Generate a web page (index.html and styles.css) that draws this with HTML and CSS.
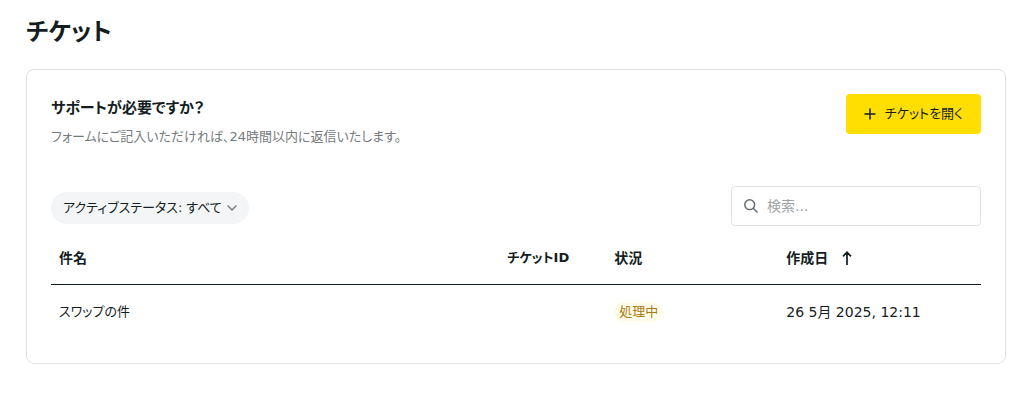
FILE: index.html
```html
<!DOCTYPE html>
<html lang="ja">
<head>
    <meta charset="UTF-8">
    <meta name="viewport" content="width=device-width, initial-scale=1.0">
    <title>チケット</title>
    <link rel="stylesheet" href="styles.css">
</head>
<body>
    <main class="page">
        <h1>チケット</h1>
        <section class="card">
            <div class="cardHeader">
                <div>
                    <h2>サポートが必要ですか？</h2>
                    <p>フォームにご記入いただければ、24時間以内に返信いたします。</p>
                </div>
                <button type="button" class="openBtn">
                    <svg width="12" height="12" viewBox="0 0 12 12" fill="none" stroke="currentColor" stroke-width="1.5" aria-hidden="true">
                        <path d="M6 .5v11M.5 6h11"/>
                    </svg>
                    チケットを開く
                </button>
            </div>

            <div class="toolbar">
                <div class="statusFilter">
                    <label for="status">アクティブステータス:</label>
                    <select id="status">
                        <option>すべて</option>
                    </select>
                    <svg width="10" height="6" viewBox="0 0 10 6" fill="none" stroke="currentColor" stroke-width="1.4" aria-hidden="true">
                        <path d="M.6 .6L5 5L9.400 .6"/>
                    </svg>
                </div>
                <label class="search">
                    <svg width="14" height="14" viewBox="0 0 14 14" fill="none" stroke="currentColor" stroke-width="1.5" aria-hidden="true">
                        <circle cx="5.700" cy="5.700" r="4.900"/>
                        <path d="M9.200 9.200L13.500 13.500"/>
                    </svg>
                    <input type="search" placeholder="検索..." aria-label="検索">
                </label>
            </div>

            <table class="tickets">
                <thead>
                    <tr>
                        <th class="colSubject">件名</th>
                        <th class="colId">チケットID</th>
                        <th class="colStatus">状況</th>
                        <th class="colDate">
                            <button type="button" class="sortBtn">
                                作成日
                                <svg width="10" height="14" viewBox="0 0 10 14" fill="none" stroke="currentColor" stroke-width="1.7" aria-hidden="true">
                                    <path d="M5 14V1.500M1 5.300L5 1.300L9 5.300"/>
                                </svg>
                            </button>
                        </th>
                    </tr>
                </thead>
                <tbody>
                    <tr>
                        <td class="subject">スワップの件</td>
                        <td></td>
                        <td><span class="badge">処理中</span></td>
                        <td>26 5月 2025, 12:11</td>
                    </tr>
                </tbody>
            </table>
        </section>
    </main>
</body>
</html>
```
FILE: styles.css
```css
* {
    box-sizing: border-box;
}
body {
    margin: 0;
    background: #fff;
    color: #141d22;
    font-family: "DejaVu Sans", "Noto Sans CJK JP", sans-serif;
    font-size: 14px;
    line-height: 20px;
    font-feature-settings: "palt";
}
button, input, select {
    font: inherit;
    font-feature-settings: inherit;
    color: inherit;
}
.page {
    padding: 12px 10px 38px 26px;
}
h1 {
    margin: 0 0 17px;
    font-size: 24px;
    line-height: 40px;
}
.card {
    padding: 24px;
    border: 1px solid #e0e2e3;
    border-radius: 8px;
}
.cardHeader {
    display: flex;
    justify-content: space-between;
    align-items: flex-start;
    margin-bottom: 38px;
}
h2 {
    margin: 0 0 4px;
    font-size: 15px;
    line-height: 28px;
}
.cardHeader p {
    margin: 0;
    color: #757a7d;
    font-size: 13px;
    line-height: 22px;
}
.openBtn {
    display: flex;
    align-items: center;
    gap: 9px;
    height: 40px;
    padding: 0 18px;
    border: none;
    border-radius: 4px;
    background: #ffde02;
    font-size: 13px;
    cursor: pointer;
}
.toolbar {
    display: flex;
    justify-content: space-between;
    align-items: center;
}
.statusFilter {
    display: flex;
    align-items: center;
    gap: 4px;
    height: 32px;
    margin-top: 4px;
    padding: 0 12px;
    border-radius: 16px;
    background: #f3f5f7;
    font-size: 13px;
}
.statusFilter select {
    appearance: none;
    border: none;
    padding: 0;
    background: none;
}
.statusFilter svg {
    color: #757a7d;
}
.search {
    display: flex;
    align-items: center;
    gap: 9px;
    width: 250px;
    height: 40px;
    padding: 0 12px;
    border: 1px solid #e0e2e3;
    border-radius: 4px;
    color: #666d70;
}
.search input {
    flex: 1;
    min-width: 0;
    padding: 0;
    border: none;
    outline: none;
    background: none;
}
.search input::placeholder {
    color: #a0a4a6;
}
.tickets {
    width: 100%;
    margin-top: 6px;
    table-layout: fixed;
    border-collapse: collapse;
    text-align: left;
}
.tickets th {
    height: 52px;
    padding: 0 8px;
    border-bottom: 1px solid #141d22;
}
.tickets td {
    height: 55px;
    padding: 0 8px;
}
.colSubject {
    width: 48.2%;
}
.colId {
    width: 11.5%;
    font-size: 13px;
}
.colStatus {
    width: 18.5%;
}
.sortBtn {
    display: flex;
    align-items: center;
    gap: 14px;
    padding: 0;
    border: none;
    background: none;
    font-weight: bold;
    cursor: pointer;
}
.subject {
    font-size: 13px;
}
.badge {
    display: inline-block;
    padding: 0 5px;
    border-radius: 10px;
    background: #fffbea;
    color: #a87c10;
    font-size: 13px;
}
```
